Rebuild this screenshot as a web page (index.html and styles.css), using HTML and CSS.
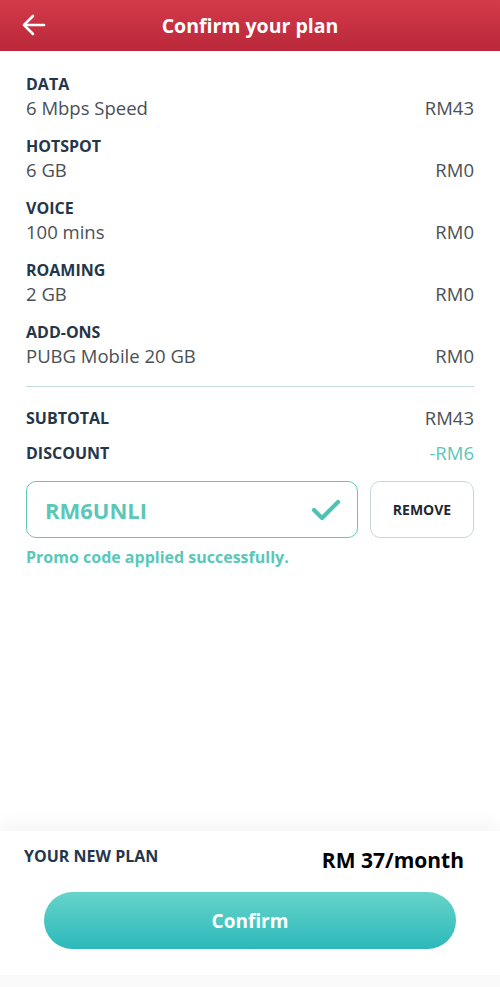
FILE: index.html
```html
<!DOCTYPE html>
<html lang="en">
<head>
    <meta charset="UTF-8">
    <meta name="viewport" content="width=device-width, initial-scale=1.0">
    <title>Confirm your plan</title>
    <link rel="stylesheet" href="styles.css">
</head>
<body>
<div class="app">
    <header class="top-bar">
        <button class="back-button" aria-label="Back">
            <svg width="24" height="22" viewBox="0 0 24 22" fill="none" stroke="#fff" stroke-width="2.6" stroke-linecap="round" stroke-linejoin="round">
                <path d="M22 11H3"/>
                <path d="M11 2L2 11l9 9"/>
            </svg>
        </button>
        <h1>Confirm your plan</h1>
    </header>

    <main class="plan-details">
        <div class="plan-item">
            <div class="item-label">DATA</div>
            <div class="item-row"><span>6 Mbps Speed</span><span>RM43</span></div>
        </div>
        <div class="plan-item">
            <div class="item-label">HOTSPOT</div>
            <div class="item-row"><span>6 GB</span><span>RM0</span></div>
        </div>
        <div class="plan-item">
            <div class="item-label">VOICE</div>
            <div class="item-row"><span>100 mins</span><span>RM0</span></div>
        </div>
        <div class="plan-item">
            <div class="item-label">ROAMING</div>
            <div class="item-row"><span>2 GB</span><span>RM0</span></div>
        </div>
        <div class="plan-item">
            <div class="item-label">ADD-ONS</div>
            <div class="item-row"><span>PUBG Mobile 20 GB</span><span>RM0</span></div>
        </div>

        <hr class="divider">

        <div class="total-row">
            <span class="item-label">SUBTOTAL</span>
            <span class="total-value">RM43</span>
        </div>
        <div class="total-row">
            <span class="item-label">DISCOUNT</span>
            <span class="total-value discount">-RM6</span>
        </div>

        <div class="promo">
            <div class="promo-input">
                <span class="promo-code">RM6UNLI</span>
                <svg width="30" height="24" viewBox="0 0 30 24" fill="none" stroke="#4fc3b2" stroke-width="4.2" stroke-linecap="round" stroke-linejoin="round">
                    <path d="M3 12l8 8L27 4"/>
                </svg>
            </div>
            <button class="remove-button">REMOVE</button>
        </div>
        <div class="promo-message">Promo code applied successfully.</div>
    </main>

    <footer class="summary">
        <div class="summary-row">
            <span class="summary-label">YOUR NEW PLAN</span>
            <span class="summary-price">RM 37/month</span>
        </div>
        <button class="confirm-button">Confirm</button>
    </footer>
</div>
</body>
</html>
```

FILE: styles.css
```css
body {
    margin: 0;
    padding: 0;
    font-family: 'Open Sans', 'Noto Sans', sans-serif;
    background: #fff;
    color: #4a5056;
}

.app {
    display: flex;
    flex-direction: column;
    height: 987px;
}

.top-bar {
    height: 51px;
    background: linear-gradient(180deg, #d43a4a 0%, #b92839 100%);
    display: flex;
    align-items: center;
    justify-content: center;
    position: relative;
    flex-shrink: 0;
}

.top-bar h1 {
    margin: 0;
    color: #fff;
    font-size: 19.5px;
    font-weight: 700;
}

.back-button {
    position: absolute;
    left: 22px;
    top: 14px;
    background: none;
    border: none;
    padding: 0;
    cursor: pointer;
    display: flex;
}

.plan-details {
    padding: 22px 26px 0 26px;
}

.plan-item {
    margin-bottom: 14px;
}

.item-label {
    color: #24364a;
    font-size: 16px;
    font-weight: 700;
    line-height: 22px;
}

.item-row {
    display: flex;
    justify-content: space-between;
    font-size: 18.5px;
    line-height: 26px;
    color: #4a5056;
}

.divider {
    border: none;
    border-top: 1px solid #c6dcdc;
    margin: 17px 0 13px 0;
}

.total-row {
    display: flex;
    justify-content: space-between;
    align-items: center;
    height: 35px;
}

.total-value {
    font-size: 18.5px;
    color: #4a5056;
}

.total-value.discount {
    color: #5ac7b8;
}

.promo {
    display: flex;
    gap: 12px;
    margin-top: 11px;
}

.promo-input {
    flex: 1;
    height: 57px;
    box-sizing: border-box;
    border: 1.5px solid #5fc9b9;
    border-radius: 10px;
    display: flex;
    align-items: center;
    justify-content: space-between;
    padding: 0 16px 0 18px;
}

.promo-code {
    color: #5ac7b8;
    font-size: 22px;
    font-weight: 700;
}

.remove-button {
    width: 104px;
    height: 57px;
    background: #fff;
    border: 1.5px solid #c9d5dd;
    border-radius: 10px;
    font-family: inherit;
    font-size: 14px;
    font-weight: 700;
    color: #1e2833;
    cursor: pointer;
}

.promo-message {
    margin-top: 8px;
    color: #5ac7b8;
    font-size: 16px;
    font-weight: 700;
}

.summary {
    margin-top: auto;
    background: #fff;
    box-shadow: 0 -8px 16px rgba(0, 0, 0, 0.04);
    padding: 12px 0 26px 0;
    border-bottom: 12px solid #fafafa;
}

.summary-row {
    display: flex;
    justify-content: space-between;
    align-items: flex-start;
    padding: 0 36px 0 24px;
    height: 34px;
}

.summary-label {
    color: #24364a;
    font-size: 16px;
    font-weight: 700;
    line-height: 26px;
}

.summary-price {
    color: #000;
    font-size: 21px;
    font-weight: 700;
    line-height: 34px;
}

.confirm-button {
    display: block;
    width: 412px;
    height: 57px;
    margin: 15px auto 0 auto;
    border: none;
    border-radius: 29px;
    background: linear-gradient(180deg, #67d4c9 0%, #2cb8bb 100%);
    color: #fff;
    font-family: inherit;
    font-size: 19px;
    font-weight: 700;
    cursor: pointer;
}
```
